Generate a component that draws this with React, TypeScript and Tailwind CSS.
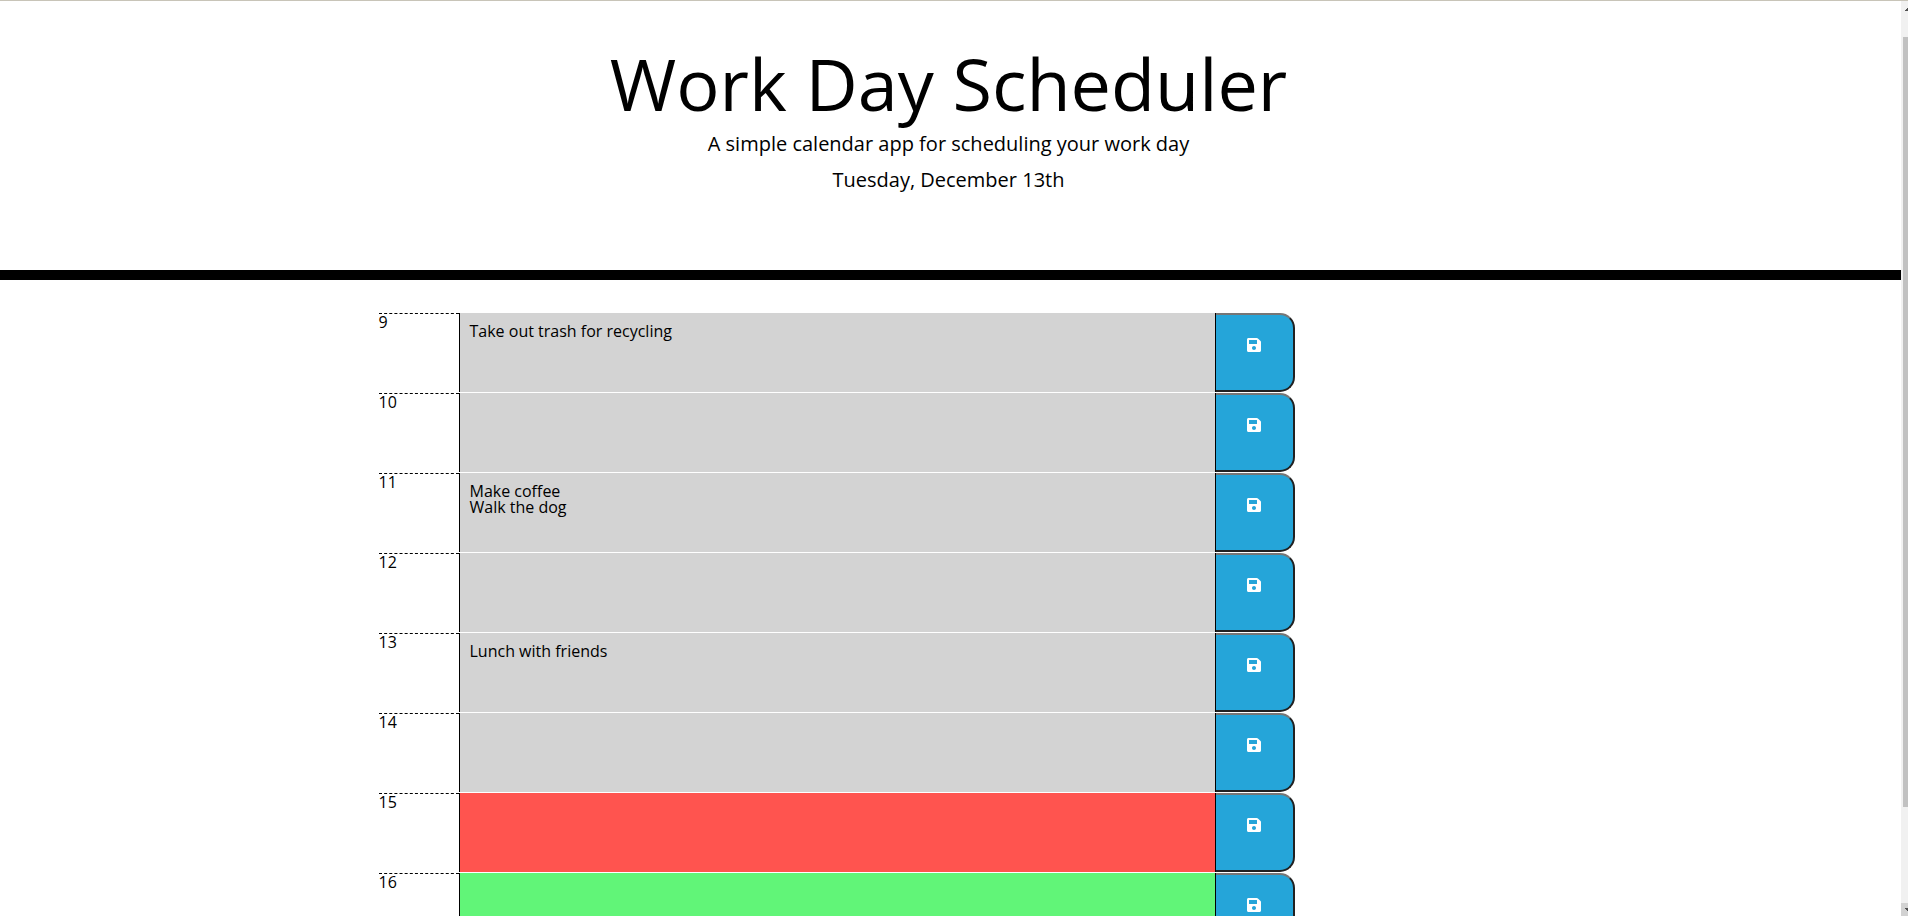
import { FaSave } from "react-icons/fa";

type Tense = "past" | "present" | "future";

const blockColors: Record<Tense, string> = {
  past: "bg-[#d3d3d3]",
  present: "bg-[#ff544f]",
  future: "bg-[#61f578]",
};

const blocks: { hour: number; text: string; tense: Tense }[] = [
  { hour: 9, text: "Take out trash for recycling", tense: "past" },
  { hour: 10, text: "", tense: "past" },
  { hour: 11, text: "Make coffee\nWalk the dog", tense: "past" },
  { hour: 12, text: "", tense: "past" },
  { hour: 13, text: "Lunch with friends", tense: "past" },
  { hour: 14, text: "", tense: "past" },
  { hour: 15, text: "", tense: "present" },
  { hour: 16, text: "", tense: "future" },
];

function TimeBlock({ hour, text, tense }: { hour: number; text: string; tense: Tense }) {
  const id = `hour-${hour}`;
  return (
    <div className="flex h-20 border-b border-white">
      <label htmlFor={id} className="w-20 shrink-0 border-t border-dashed border-black">
        {hour}
      </label>
      <textarea
        id={id}
        defaultValue={text}
        className={`block min-w-0 flex-1 resize-none overflow-hidden border-x border-black p-2.5 outline-none ${blockColors[tense]}`}
      />
      <button
        type="button"
        aria-label={`Save ${hour}`}
        className="flex w-[79px] shrink-0 justify-center rounded-r-[15px] border-y-2 border-r-2 border-t-[#767676] border-r-[#212121] border-b-[#212121] bg-[#25a5d9] pt-[22px] text-white"
      >
        <FaSave size={16} />
      </button>
    </div>
  );
}

function Scrollbar() {
  return (
    <div aria-hidden="true" className="flex w-[7px] shrink-0 flex-col justify-between overflow-hidden bg-[#f1f1f1]">
      <svg className="mt-[7px] ml-1 h-[3px] w-[9px]" viewBox="0 0 9 3" fill="#505050">
        <path d="M0 3V2H1V1H2V0H7V1H8V2H9V3Z" />
      </svg>
      <div className="mt-[26px] mb-24 ml-0.5 flex-1 bg-[#c1c1c1]" />
      <div className="h-[13px] bg-[#d2d2d2] pt-[5px] pl-1">
        <svg className="h-[3px] w-[9px]" viewBox="0 0 9 3" fill="#505050">
          <path d="M0 0V1H1V2H2V3H7V2H8V1H9V0Z" />
        </svg>
      </div>
    </div>
  );
}

export default function App() {
  return (
    <div className="flex h-screen overflow-hidden border-t border-[#c8c4b8] bg-white font-['Open_Sans',sans-serif] text-base leading-4 text-black">
      <div className="min-w-0 flex-1">
        <header className="border-b-10 border-black pt-[42px] pr-1 pb-[76px] text-center">
          <h1 className="text-[72px] leading-20">Work Day Scheduler</h1>
          <p className="mt-[7px] text-xl leading-7">A simple calendar app for scheduling your work day</p>
          <p className="mt-2 text-xl leading-7">Tuesday, December 13th</p>
        </header>
        <main className="mx-auto mt-[33px] max-w-[1144px] pr-1">
          <div className="max-w-[916px]">
            {blocks.map((block) => (
              <TimeBlock key={block.hour} {...block} />
            ))}
          </div>
        </main>
      </div>
      <Scrollbar />
    </div>
  );
}
